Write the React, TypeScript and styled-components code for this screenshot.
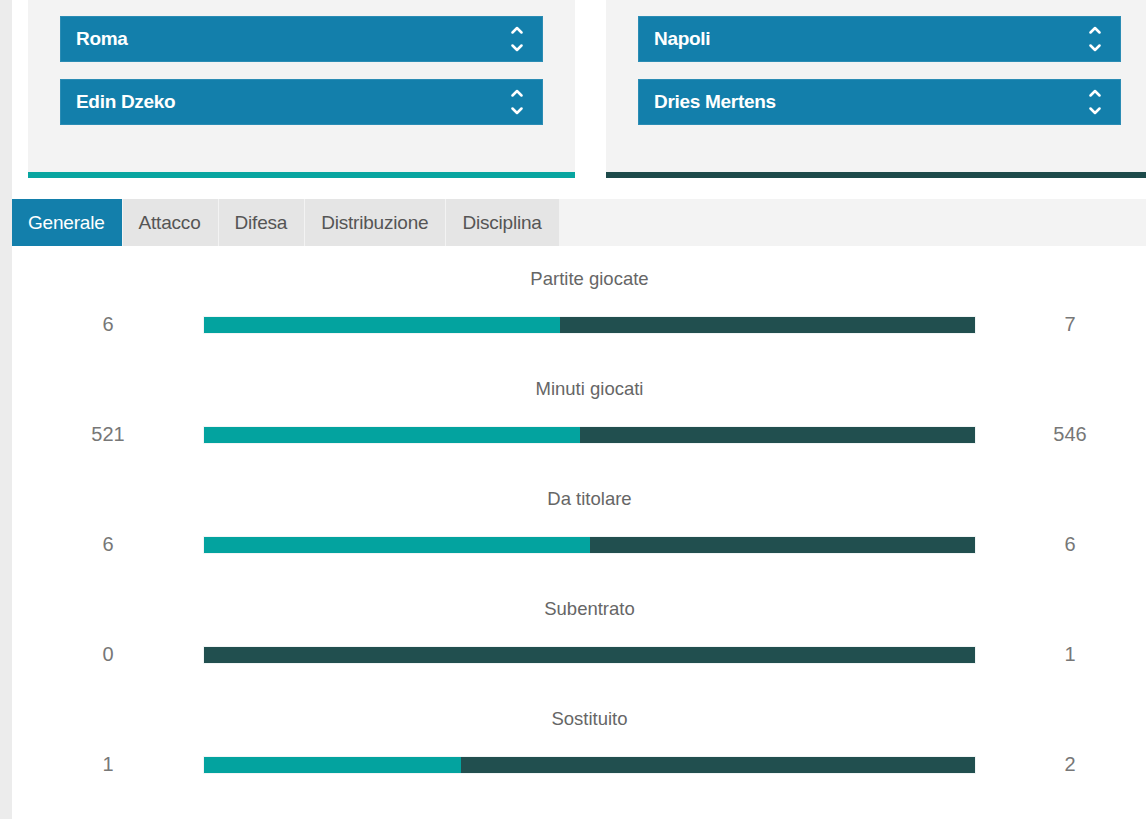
import React from "react";
import styled, { createGlobalStyle } from "styled-components";

const GlobalStyle = createGlobalStyle`
  html, body {
    margin: 0;
    padding: 0;
    background: #ececec;
    overflow: hidden;
  }
  body {
    font-family: "Liberation Sans", Arial, sans-serif;
  }
`;

const Page = styled.div`
  width: 1157px;
  margin-left: 12px;
  background: #ffffff;
  min-height: 819px;
`;

const Selectors = styled.div`
  display: grid;
  grid-template-columns: 1fr 1fr;
  gap: 31px;
  padding: 0 16px;
`;

const TeamPanel = styled.div<{ $accent: string }>`
  display: flex;
  flex-direction: column;
  gap: 17px;
  padding: 16px 32px 47px 32px;
  background: #f3f3f3;
  border-bottom: 6px solid ${(p) => p.$accent};
`;

const SelectBox = styled.div`
  display: flex;
  align-items: center;
  justify-content: space-between;
  height: 46px;
  box-sizing: border-box;
  padding: 0 19px 0 15px;
  background: #137fab;
  border: 1px solid #2b8cb4;
  color: #ffffff;
  font-size: 19px;
  font-weight: bold;
  letter-spacing: -0.3px;
  cursor: pointer;
`;

const TabBar = styled.div`
  display: flex;
  margin-top: 21px;
  height: 47px;
  background: #f3f3f3;
`;

const Tab = styled.div<{ $active?: boolean }>`
  display: flex;
  align-items: center;
  padding: 0 17px 0 16px;
  margin-right: 1px;
  font-size: 19px;
  letter-spacing: -0.2px;
  color: ${(p) => (p.$active ? "#ffffff" : "#555555")};
  background: ${(p) => (p.$active ? "#137fab" : "#e5e5e5")};
  cursor: pointer;
`;

const Stats = styled.div`
  padding-top: 23px;
`;

const StatBlock = styled.div`
  margin-bottom: 44px;
`;

const StatTitle = styled.div`
  height: 20px;
  line-height: 20px;
  text-align: center;
  padding-right: 2px;
  font-size: 18.5px;
  color: #666666;
`;

const StatRow = styled.div`
  display: grid;
  grid-template-columns: 192px 771px 190px;
  align-items: center;
  height: 22px;
  margin-top: 24px;
`;

const Value = styled.div`
  text-align: center;
  font-size: 20px;
  color: #777777;
`;

const Bar = styled.div`
  display: flex;
  height: 16px;
  box-shadow: 0 0 0 1px #f1f5f5;
  background: #214f4f;
`;

const HomePart = styled.div`
  height: 100%;
  background: #03a39f;
`;

const AwayPart = styled.div`
  flex: 1;
  height: 100%;
  background: #214f4f;
`;

const Chevrons = () => (
  <svg width="12" height="28" viewBox="0 0 12 28" fill="none">
    <polyline points="1.5,7.5 6,3 10.5,7.5" stroke="#fff" strokeWidth="2.5" strokeLinecap="round" strokeLinejoin="round" />
    <polyline points="1.5,20.5 6,25 10.5,20.5" stroke="#fff" strokeWidth="2.5" strokeLinecap="round" strokeLinejoin="round" />
  </svg>
);

const stats = [
  { label: "Partite giocate", home: 6, away: 7 },
  { label: "Minuti giocati", home: 521, away: 546 },
  { label: "Da titolare", home: 6, away: 6 },
  { label: "Subentrato", home: 0, away: 1 },
  { label: "Sostituito", home: 1, away: 2 },
];

const tabs = ["Generale", "Attacco", "Difesa", "Distribuzione", "Disciplina"];

export default function App() {
  return (
    <>
      <GlobalStyle />
      <Page>
        <Selectors>
          <TeamPanel $accent="#08a5a0">
            <SelectBox>
              Roma
              <Chevrons />
            </SelectBox>
            <SelectBox>
              Edin Dzeko
              <Chevrons />
            </SelectBox>
          </TeamPanel>
          <TeamPanel $accent="#1d4a4a">
            <SelectBox>
              Napoli
              <Chevrons />
            </SelectBox>
            <SelectBox>
              Dries Mertens
              <Chevrons />
            </SelectBox>
          </TeamPanel>
        </Selectors>

        <TabBar>
          {tabs.map((t, i) => (
            <Tab key={t} $active={i === 0}>
              {t}
            </Tab>
          ))}
        </TabBar>

        <Stats>
          {stats.map((s) => {
            const total = s.home + s.away;
            const pct = total ? (s.home / total) * 100 : 0;
            return (
              <StatBlock key={s.label}>
                <StatTitle>{s.label}</StatTitle>
                <StatRow>
                  <Value>{s.home}</Value>
                  <Bar>
                    <HomePart style={{ width: `${pct}%` }} />
                    <AwayPart />
                  </Bar>
                  <Value>{s.away}</Value>
                </StatRow>
              </StatBlock>
            );
          })}
        </Stats>
      </Page>
    </>
  );
}
